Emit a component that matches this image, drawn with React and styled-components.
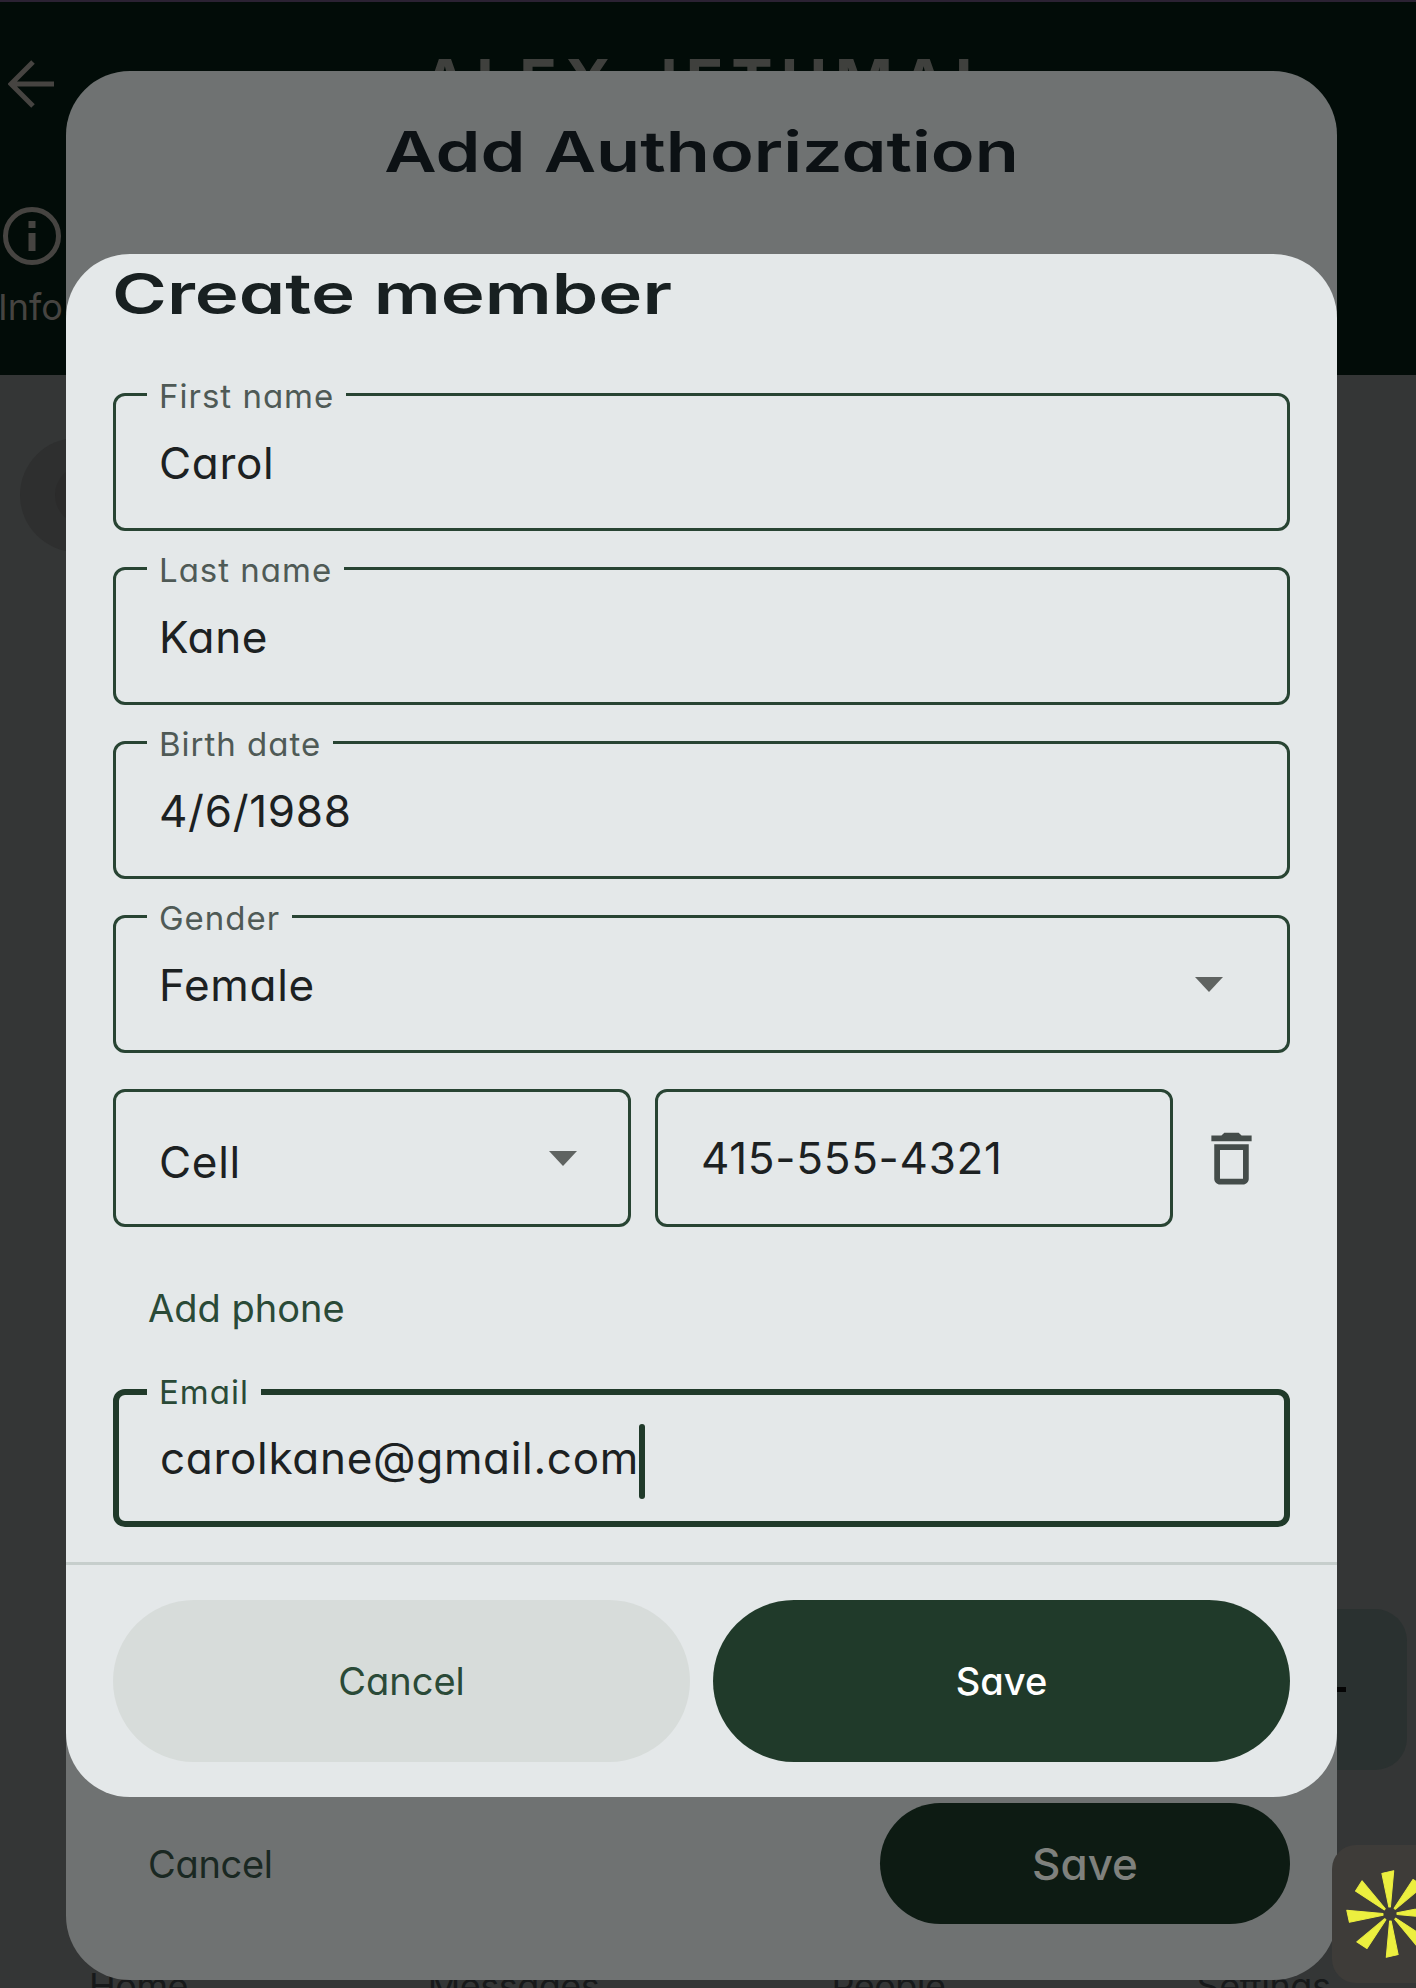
import React from 'react';
import styled, { createGlobalStyle } from 'styled-components';

const GlobalStyle = createGlobalStyle`
  html, body {
    margin: 0;
    padding: 0;
    background: #343636;
  }
  * {
    box-sizing: border-box;
  }
`;

const bodyFont = `Inter, "Noto Sans", sans-serif`;

const Page = styled.div`
  position: relative;
  width: 1416px;
  height: 1988px;
  overflow: hidden;
  display: flex;
  flex-direction: column;
  background: #343636;
  font-family: ${bodyFont};
  font-feature-settings: 'cv11' 1;
`;

const Header = styled.header`
  height: 375px;
  flex: none;
  background: #020c08;
  border-top: 2px solid #2b2233;
  color: #464441;
  display: flex;
  flex-direction: column;
`;

const HeaderRow = styled.div`
  display: flex;
  height: 122px;
  padding: 58px 0 0 8px;
`;

const HeaderName = styled.div`
  margin: -13px 0 0 366px;
  font-size: 62px;
  line-height: 70px;
  font-weight: 700;
  letter-spacing: 8px;
  color: #3f403d;
  white-space: nowrap;
`;

const InfoTab = styled.div`
  display: flex;
  flex-direction: column;
  width: 64px;
  padding-top: 82px;
  font-size: 36px;
  line-height: 44px;
  color: #464441;
`;

const InfoLabel = styled.span`
  margin-top: 19px;
  margin-left: -2px;
`;

const Body = styled.main`
  flex: 1;
  padding: 63px 0 0 20px;
`;

const Avatar = styled.div`
  width: 114px;
  height: 114px;
  border-radius: 50%;
  background: #2e2f2f;
  display: flex;
  align-items: center;
  padding-left: 35px;
`;

const AvatarCore = styled.div`
  width: 60px;
  height: 60px;
  border-radius: 50%;
  background: #2b2b2b;
`;

const BottomNav = styled.nav`
  flex: none;
  height: 16px;
  width: 1500px;
  margin-left: -49px;
  display: grid;
  grid-template-columns: repeat(4, 375px);
  font-size: 36px;
  line-height: 36px;
  letter-spacing: -0.5px;
  color: #17191a;
  text-align: center;
`;

const NavItem = styled.span`
  display: block;
  margin-top: -4px;
`;

const FloatingAction = styled.div`
  position: absolute;
  left: 1280px;
  top: 1609px;
  width: 127px;
  height: 161px;
  border-radius: 32px;
  background: #2a3130;
  display: flex;
  align-items: center;
  justify-content: flex-end;
  padding: 0 61px 0 0;
  &::after {
    content: '';
    width: 9px;
    height: 5px;
    background: #050505;
  }
`;

const OuterDialog = styled.section`
  position: absolute;
  left: 66px;
  top: 71px;
  width: 1271px;
  height: 1909px;
  border-radius: 64px;
  background: #6f7272;
  display: flex;
  flex-direction: column;
`;

const Heading = styled.h1`
  margin: 0;
  font-family: ${bodyFont};
  font-size: 56px;
  line-height: 68px;
  font-weight: 600;
  color: ${(p) => p.$color};
  white-space: nowrap;
  transform: scaleX(${(p) => p.$stretch});
  transform-origin: ${(p) => p.$origin};
`;

const OuterHead = styled.div`
  padding-top: 47px;
  text-align: center;
`;

const OuterFooter = styled.div`
  margin-top: auto;
  padding: 0 47px 56px 47px;
  display: flex;
  align-items: center;
  justify-content: space-between;
`;

const GhostText = styled.span`
  margin-left: 35px;
  font-size: 38px;
  letter-spacing: -0.3px;
  color: #1a2822;
`;

const DimSave = styled.div`
  width: 410px;
  height: 121px;
  border-radius: 61px;
  background: #0d1b13;
  color: #7f817d;
  font-size: 44px;
  font-weight: 500;
  display: flex;
  align-items: center;
  justify-content: center;
`;

const InnerDialog = styled.div`
  position: absolute;
  left: 0;
  right: 0;
  top: 183px;
  height: 1543px;
  border-radius: 64px;
  background: #e4e8e9;
  display: flex;
  flex-direction: column;
`;

const InnerHead = styled.div`
  height: 139px;
  padding: 6px 0 0 46px;
`;

const Form = styled.div`
  display: flex;
  flex-direction: column;
  gap: 36px;
  padding: 0 47px;
`;

const FieldBox = styled.div`
  position: relative;
  height: 138px;
  border: ${(p) => (p.$focused ? '6px solid #203a2a' : '3px solid #284433')};
  border-radius: 12px;
  display: flex;
  align-items: center;
  justify-content: space-between;
  padding: ${(p) => (p.$focused ? '0 58px 0 41px' : `0 ${p.$arrowGap || 64}px 0 43px`)};
`;

const FieldLabel = styled.label`
  position: absolute;
  left: ${(p) => (p.$focused ? '28px' : '31px')};
  top: ${(p) => (p.$focused ? '-23px' : '-20px')};
  padding: 0 12px;
  background: #e4e8e9;
  font-size: 33px;
  line-height: 40px;
  letter-spacing: 1px;
  color: ${(p) => (p.$focused ? '#2a4a37' : '#4f5a56')};
`;

const Value = styled.span`
  font-size: 44px;
  line-height: 56px;
  letter-spacing: 0.7px;
  color: #1c2122;
  white-space: nowrap;
  position: relative;
  top: ${(p) => p.$shift ?? 1}px;
`;

const Caret = styled.span`
  display: inline-block;
  width: 6px;
  height: 75px;
  border-radius: 3px;
  background: #203a2a;
  vertical-align: middle;
`;

const Arrow = styled.span`
  width: 0;
  height: 0;
  border-left: 14px solid transparent;
  border-right: 14px solid transparent;
  border-top: 15px solid #5f6361;
`;

const PhoneRow = styled.div`
  display: grid;
  grid-template-columns: 518px 518px 117px;
  column-gap: 24px;
  align-items: center;
`;

const TrashButton = styled.div`
  width: 117px;
  display: flex;
  justify-content: center;
  margin-left: -24px;
`;

const AddPhone = styled.div`
  height: 90px;
  display: flex;
  align-items: center;
  padding-left: 35px;
  font-size: 38px;
  color: #2a4a37;
`;

const Divider = styled.div`
  margin-top: 35px;
  height: 3px;
  background: #c6cecc;
`;

const Actions = styled.div`
  display: grid;
  grid-template-columns: 1fr 1fr;
  column-gap: 23px;
  padding: 35px 47px 0 47px;
`;

const ActionButton = styled.button`
  height: 162px;
  border: none;
  border-radius: 81px;
  font-family: ${bodyFont};
  font-feature-settings: 'cv11' 1;
  font-size: 38px;
  font-weight: ${(p) => (p.$primary ? 500 : 400)};
  color: ${(p) => (p.$primary ? '#ffffff' : '#2a4a37')};
  background: ${(p) => (p.$primary ? '#203a2a' : '#d7dcda')};
`;

const BrandTile = styled.div`
  position: absolute;
  left: 1332px;
  top: 1845px;
  width: 116px;
  height: 138px;
  border-radius: 24px;
  background: #3e3c39;
  display: flex;
  align-items: center;
  justify-content: center;
`;

const BackIcon = () => (
  <svg width="48" height="48" viewBox="0 0 48 48" fill="none" stroke="#464441" strokeWidth="5">
    <path d="M46 24H3M25 2 3 24l22 22" />
  </svg>
);

const InfoIcon = () => (
  <svg width="60" height="60" viewBox="0 0 60 60" fill="none" style={{ marginLeft: 2 }}>
    <circle cx="30" cy="30" r="26.5" stroke="#464441" strokeWidth="5" />
    <rect x="26.5" y="27" width="7" height="18" fill="#464441" />
    <rect x="26.5" y="15" width="7" height="7" fill="#464441" />
  </svg>
);

const TrashIcon = () => (
  <svg width="69" height="69" viewBox="0 0 24 24" fill="#444c4a">
    <path d="M6 19c0 1.1.9 2 2 2h8c1.1 0 2-.9 2-2V7H6v12zM8 9h8v10H8V9zm7.5-5l-1-1h-5l-1 1H5v2h14V4h-3.5z" />
  </svg>
);

const BrandMark = () => (
  <svg width="96" height="96" viewBox="-48 -48 96 96" fill="#ecef3f" stroke="#ecef3f" strokeWidth="1" strokeLinejoin="round">
    {[0, 45, 90, 135, 180, 225, 270, 315].map((angle) => (
      <polygon key={angle} points="-0.8,-7 0.8,-7 6,-43 -6,-41" transform={`rotate(${angle - 3})`} />
    ))}
  </svg>
);

const Field = ({ label, focused, arrowGap, children }) => (
  <FieldBox $focused={focused} $arrowGap={arrowGap}>
    {label && <FieldLabel $focused={focused}>{label}</FieldLabel>}
    {children}
  </FieldBox>
);

const App = () => (
  <Page>
    <GlobalStyle />
    <Header>
      <HeaderRow>
        <BackIcon />
        <HeaderName>ALEX JETHMAL</HeaderName>
      </HeaderRow>
      <InfoTab>
        <InfoIcon />
        <InfoLabel>Info</InfoLabel>
      </InfoTab>
    </Header>
    <Body>
      <Avatar>
        <AvatarCore />
      </Avatar>
    </Body>
    <BottomNav>
      <NavItem>Home</NavItem>
      <NavItem>Messages</NavItem>
      <NavItem>People</NavItem>
      <NavItem>Settings</NavItem>
    </BottomNav>
    <FloatingAction />

    <OuterDialog>
      <OuterHead>
        <Heading $color="#0c1114" $stretch={1.287} $origin="center">Add Authorization</Heading>
      </OuterHead>
      <OuterFooter>
        <GhostText>Cancel</GhostText>
        <DimSave>Save</DimSave>
      </OuterFooter>
      <InnerDialog>
        <InnerHead>
          <Heading $color="#182021" $stretch={1.33} $origin="left">Create member</Heading>
        </InnerHead>
        <Form>
          <Field label="First name"><Value>Carol</Value></Field>
          <Field label="Last name"><Value>Kane</Value></Field>
          <Field label="Birth date"><Value>4/6/1988</Value></Field>
          <Field label="Gender">
            <Value>Female</Value>
            <Arrow />
          </Field>
          <PhoneRow>
            <Field arrowGap={51}>
              <Value $shift={4}>Cell</Value>
              <Arrow />
            </Field>
            <Field><Value $shift={0}>415-555-4321</Value></Field>
            <TrashButton><TrashIcon /></TrashButton>
          </PhoneRow>
          <AddPhone>Add phone</AddPhone>
          <Field label="Email" focused>
            <Value $shift={3}>carolkane@gmail.com<Caret /></Value>
          </Field>
        </Form>
        <Divider />
        <Actions>
          <ActionButton>Cancel</ActionButton>
          <ActionButton $primary>Save</ActionButton>
        </Actions>
      </InnerDialog>
    </OuterDialog>

    <BrandTile>
      <BrandMark />
    </BrandTile>
  </Page>
);

export default App;
